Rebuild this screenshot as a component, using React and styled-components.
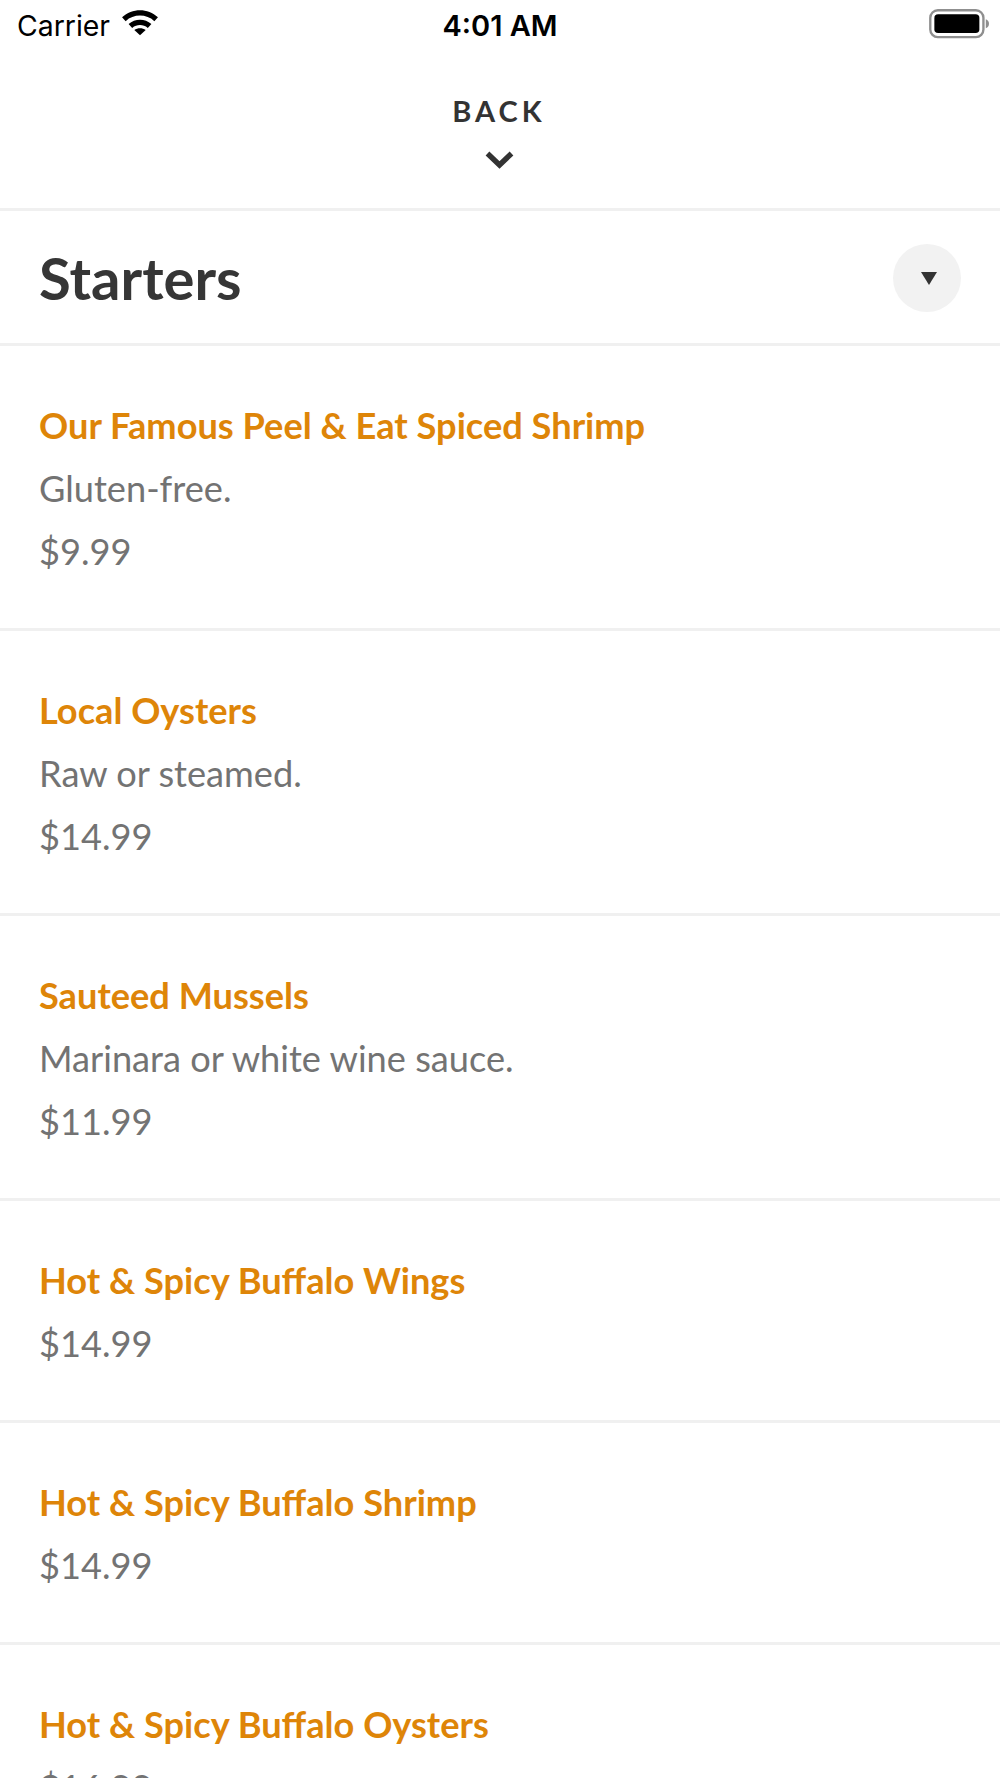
import React from "react";
import styled, { createGlobalStyle } from "styled-components";

const items = [
  { name: "Our Famous Peel & Eat Spiced Shrimp", desc: "Gluten-free.", price: "$9.99" },
  { name: "Local Oysters", desc: "Raw or steamed.", price: "$14.99" },
  { name: "Sauteed Mussels", desc: "Marinara or white wine sauce.", price: "$11.99" },
  { name: "Hot & Spicy Buffalo Wings", price: "$14.99" },
  { name: "Hot & Spicy Buffalo Shrimp", price: "$14.99" },
  { name: "Hot & Spicy Buffalo Oysters", price: "$16.99" },
];

function App() {
  return (
    <>
      <GlobalStyle />
      <Page>
        <StatusBar>
          <Carrier>
            Carrier
            <svg width="38" height="28" viewBox="0 0 36 26">
              <path d="M1 8.5C10.5 -0.5 25.5 -0.5 35 8.5L31.6 12.2C24 5.2 12 5.2 4.4 12.2Z" fill="#000" />
              <path d="M7.2 15C13.3 9.6 22.7 9.6 28.8 15L25.4 18.6C21 15 15 15 10.6 18.6Z" fill="#000" />
              <path d="M12.6 20.6C15.7 18.3 20.3 18.3 23.4 20.6L18 25.6Z" fill="#000" />
            </svg>
          </Carrier>
          <Clock>4:01 AM</Clock>
          <Battery>
            <svg width="60" height="30" viewBox="0 0 56 28">
              <rect x="1.2" y="1.2" width="49.6" height="25" rx="7" fill="none" stroke="#8f8f8f" strokeWidth="2.2" />
              <rect x="5" y="5" width="42" height="17.5" rx="3.5" fill="#000" />
              <path d="M53 9.5C55 10.3 56 11.8 56 13.7C56 15.6 55 17.1 53 17.9Z" fill="#8f8f8f" />
            </svg>
          </Battery>
        </StatusBar>
        <BackBar>
          <BackLabel>BACK</BackLabel>
          <svg width="31" height="20" viewBox="0 0 30 20">
            <path d="M3 3.5L15 15L27 3.5" fill="none" stroke="#333" strokeWidth="5.4" />
          </svg>
        </BackBar>
        <SectionHeader>
          <SectionTitle>Starters</SectionTitle>
          <Toggle>
            <Caret />
          </Toggle>
        </SectionHeader>
        {items.map((item) => (
          <Row key={item.name}>
            <Name>{item.name}</Name>
            {item.desc && <Detail>{item.desc}</Detail>}
            <Detail>{item.price}</Detail>
          </Row>
        ))}
      </Page>
    </>
  );
}

const GlobalStyle = createGlobalStyle`
  html, body {
    margin: 0;
    padding: 0;
    background: #fff;
  }
`;

const Page = styled.div`
  width: 1000px;
  height: 1778px;
  overflow: hidden;
  background: #fff;
  font-family: Lato, "Liberation Sans", sans-serif;
`;

const StatusBar = styled.div`
  height: 54px;
  display: grid;
  grid-template-columns: 1fr auto 1fr;
  align-items: center;
  padding: 0 0 4px;
  box-sizing: border-box;
  font-family: Inter, "Liberation Sans", sans-serif;
  color: #000;
`;

const Carrier = styled.div`
  display: flex;
  align-items: center;
  gap: 11px;
  padding-left: 17px;
  font-size: 28.4px;
  svg {
    margin-top: -6px;
  }
`;

const Clock = styled.div`
  font-size: 29px;
  font-weight: 600;
`;

const Battery = styled.div`
  display: flex;
  justify-content: flex-end;
  padding-right: 11px;
  svg {
    margin-top: -2px;
  }
`;

const BackBar = styled.div`
  height: 157px;
  box-sizing: border-box;
  border-bottom: 3px solid #f0f0f0;
  display: flex;
  flex-direction: column;
  align-items: center;
  padding: 41px 2px 0 0;
  gap: 23px;
  color: #333;
`;

const BackLabel = styled.div`
  font-size: 29px;
  font-weight: 700;
  line-height: 32px;
  letter-spacing: 4px;
`;

const SectionHeader = styled.div`
  height: 135px;
  box-sizing: border-box;
  border-bottom: 3px solid #f0f0f0;
  display: flex;
  align-items: center;
  justify-content: space-between;
  padding: 0 39px;
`;

const SectionTitle = styled.h1`
  margin: 0;
  font-size: 58px;
  font-weight: 700;
  color: #363636;
`;

const Toggle = styled.div`
  width: 68px;
  height: 68px;
  margin-top: 1px;
  border-radius: 50%;
  background: #f2f2f2;
  display: flex;
  align-items: center;
  justify-content: center;
`;

const Caret = styled.div`
  width: 0;
  height: 0;
  margin: 2px 0 0 3px;
  border-left: 8.5px solid transparent;
  border-right: 8.5px solid transparent;
  border-top: 13px solid #333;
`;

const Row = styled.div`
  box-sizing: border-box;
  border-bottom: 3px solid #f0f0f0;
  padding: 48px 39px 45px;
`;

const Name = styled.div`
  font-size: 36.2px;
  font-weight: 700;
  line-height: 63px;
  color: #de8508;
`;

const Detail = styled.div`
  font-size: 36.2px;
  line-height: 63px;
  color: #737373;
`;

export default App;
